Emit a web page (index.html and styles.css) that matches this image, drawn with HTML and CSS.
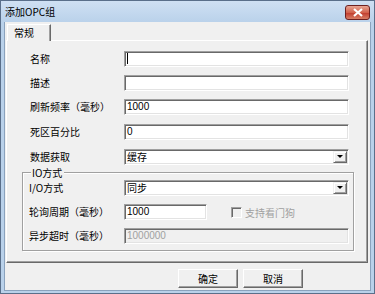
FILE: index.html
```html
<!DOCTYPE html>
<html lang="zh-CN">
<head>
    <meta charset="UTF-8">
    <title>添加OPC组</title>
    <link rel="stylesheet" href="styles.css">
</head>
<body>
    <div class="window">
        <!-- Title bar -->
        <div class="titlebar">
            <span class="title">添加OPC组</span>
            <span class="close">
                <svg width="10" height="9" viewBox="0 0 10 9">
                    <path d="M1 1 L9 8 M9 1 L1 8" stroke="#fff" stroke-width="2.2" fill="none"/>
                </svg>
            </span>
        </div>

        <div class="client">
            <!-- Tabs -->
            <div class="tabs">
                <div class="tab">常规</div>
            </div>

            <div class="panel">
                <div class="rows">
                    <div class="row">
                        <span class="label">名称</span>
                        <div class="edit"><span class="caret"></span></div>
                    </div>
                    <div class="row">
                        <span class="label">描述</span>
                        <div class="edit"></div>
                    </div>
                    <div class="row">
                        <span class="label">刷新频率（毫秒）</span>
                        <div class="edit">1000</div>
                    </div>
                    <div class="row row-loose">
                        <span class="label">死区百分比</span>
                        <div class="edit">0</div>
                    </div>
                    <div class="row row-loose">
                        <span class="label">数据获取</span>
                        <div class="edit combo">缓存<span class="arrow"></span></div>
                    </div>
                </div>

                <!-- IO group -->
                <div class="group">
                    <span class="group-title">IO方式</span>
                    <div class="row">
                        <span class="label label-group">I/O方式</span>
                        <div class="edit combo">同步<span class="arrow"></span></div>
                    </div>
                    <div class="row">
                        <span class="label label-group">轮询周期（毫秒）</span>
                        <div class="edit short">1000</div>
                        <span class="check"><span class="box"></span>支持看门狗</span>
                    </div>
                    <div class="row">
                        <span class="label label-group">异步超时（毫秒）</span>
                        <div class="edit disabled">1000000</div>
                    </div>
                </div>
            </div>

            <div class="buttons">
                <button class="btn">确定</button>
                <button class="btn">取消</button>
            </div>
        </div>
    </div>
</body>
</html>
```

FILE: styles.css
```css
body {
    margin: 0;
    padding: 0;
    font-family: "Noto Sans CJK SC", "Liberation Sans", sans-serif;
    font-size: 10px;
    color: #000;
}
.window {
    width: 375px;
    height: 294px;
    box-sizing: border-box;
    border: 1px solid #5a6f8a;
    background: linear-gradient(#cfe0f3, #b9d1ea 22px);
    display: flex;
    flex-direction: column;
}
.titlebar {
    height: 21px;
    display: flex;
    align-items: center;
    justify-content: space-between;
    padding: 0 4px 0 4px;
}
.title {
    font-size: 10px;
    line-height: 12px;
    margin-top: 1px;
}
.close {
    width: 23px;
    height: 13px;
    margin-top: 2px;
    border: 1px solid #6d2020;
    border-radius: 3px;
    background: linear-gradient(#e8a593, #d2624d 50%, #c0392b 51%, #d87e66);
    display: flex;
    align-items: center;
    justify-content: center;
}
.client {
    flex: 1;
    margin: 0 3px 2px 3px;
    background: #f0f0f0;
    border: 1px solid #8aa2bd;
    border-top: none;
    display: flex;
    flex-direction: column;
}
.tabs {
    display: flex;
    padding-left: 2px;
    height: 18px;
    align-items: flex-end;
}
.tab {
    width: 36px;
    height: 16px;
    line-height: 15px;
    padding-left: 6px;
    border: 1px solid #fff;
    border-right: 1px solid #696969;
    border-bottom: none;
    box-shadow: inset -1px 0 #a0a0a0;
    background: #f0f0f0;
    position: relative;
    margin-bottom: -1px;
    z-index: 1;
}
.panel {
    margin-left: 1px;
    width: 362px;
    height: 223px;
    box-sizing: border-box;
    border: 1px solid #fff;
    border-right-color: #696969;
    border-bottom-color: #696969;
    box-shadow: inset -1px -1px #a0a0a0;
    padding: 10px 0 0 0;
}
.rows {
    display: flex;
    flex-direction: column;
    gap: 8px;
}
.row {
    display: flex;
    align-items: center;
    height: 16px;
}
.row-loose {
    margin-top: 1px;
}
.label {
    width: 94px;
    padding-left: 23px;
    flex-shrink: 0;
    line-height: 12px;
}
.label-group {
    width: 95px;
    padding-left: 6px;
}
.edit {
    width: 225px;
    height: 16px;
    box-sizing: border-box;
    background: #fff;
    border: 1px solid;
    border-color: #a0a0a0 #fff #fff #a0a0a0;
    box-shadow: inset 1px 1px #696969, inset -1px -1px #e3e3e3;
    font-family: "Liberation Sans", "Noto Sans CJK SC", sans-serif;
    font-size: 10px;
    line-height: 14px;
    padding-left: 2px;
    position: relative;
}
.combo {
    font-family: "Noto Sans CJK SC", sans-serif;
}
.caret {
    display: inline-block;
    width: 1px;
    height: 11px;
    background: #000;
    margin-top: 1px;
}
.arrow {
    position: absolute;
    right: 1px;
    top: 1px;
    width: 14px;
    height: 12px;
    box-sizing: border-box;
    background: #f0f0f0;
    border: 1px solid;
    border-color: #f0f0f0 #696969 #696969 #f0f0f0;
    box-shadow: inset 1px 1px #fff, inset -1px -1px #a0a0a0;
}
.arrow::after {
    content: "";
    position: absolute;
    left: 3px;
    top: 3px;
    border-left: 3px solid transparent;
    border-right: 3px solid transparent;
    border-top: 3px solid #000;
}
.short {
    width: 83px;
}
.disabled {
    background: #f0f0f0;
    color: #a0a0a0;
}
.check {
    display: flex;
    align-items: center;
    gap: 3px;
    margin-left: 24px;
    color: #a0a0a0;
}
.box {
    width: 11px;
    height: 11px;
    box-sizing: border-box;
    border: 1px solid;
    border-color: #a0a0a0 #fff #fff #a0a0a0;
    box-shadow: inset 1px 1px #696969;
    background: #f0f0f0;
}
.group {
    position: relative;
    margin: 7px 0 0 15px;
    width: 332px;
    height: 79px;
    box-sizing: border-box;
    border: 1px solid #a0a0a0;
    box-shadow: inset 1px 1px #fff, 1px 1px #fff;
    padding-top: 7px;
    display: flex;
    flex-direction: column;
    gap: 8px;
}
.group-title {
    position: absolute;
    top: -6px;
    left: 8px;
    padding: 0 2px 0 1px;
    background: #f0f0f0;
    line-height: 11px;
}
.buttons {
    display: flex;
    gap: 5px;
    padding-left: 173px;
    margin-top: 6px;
}
.btn {
    width: 60px;
    height: 19px;
    box-sizing: border-box;
    padding: 0;
    background: #f0f0f0;
    border: 1px solid;
    border-color: #fff #696969 #696969 #fff;
    box-shadow: inset -1px -1px #a0a0a0;
    font-family: "Noto Sans CJK SC", sans-serif;
    font-size: 10px;
    line-height: 15px;
    color: #000;
}
```
